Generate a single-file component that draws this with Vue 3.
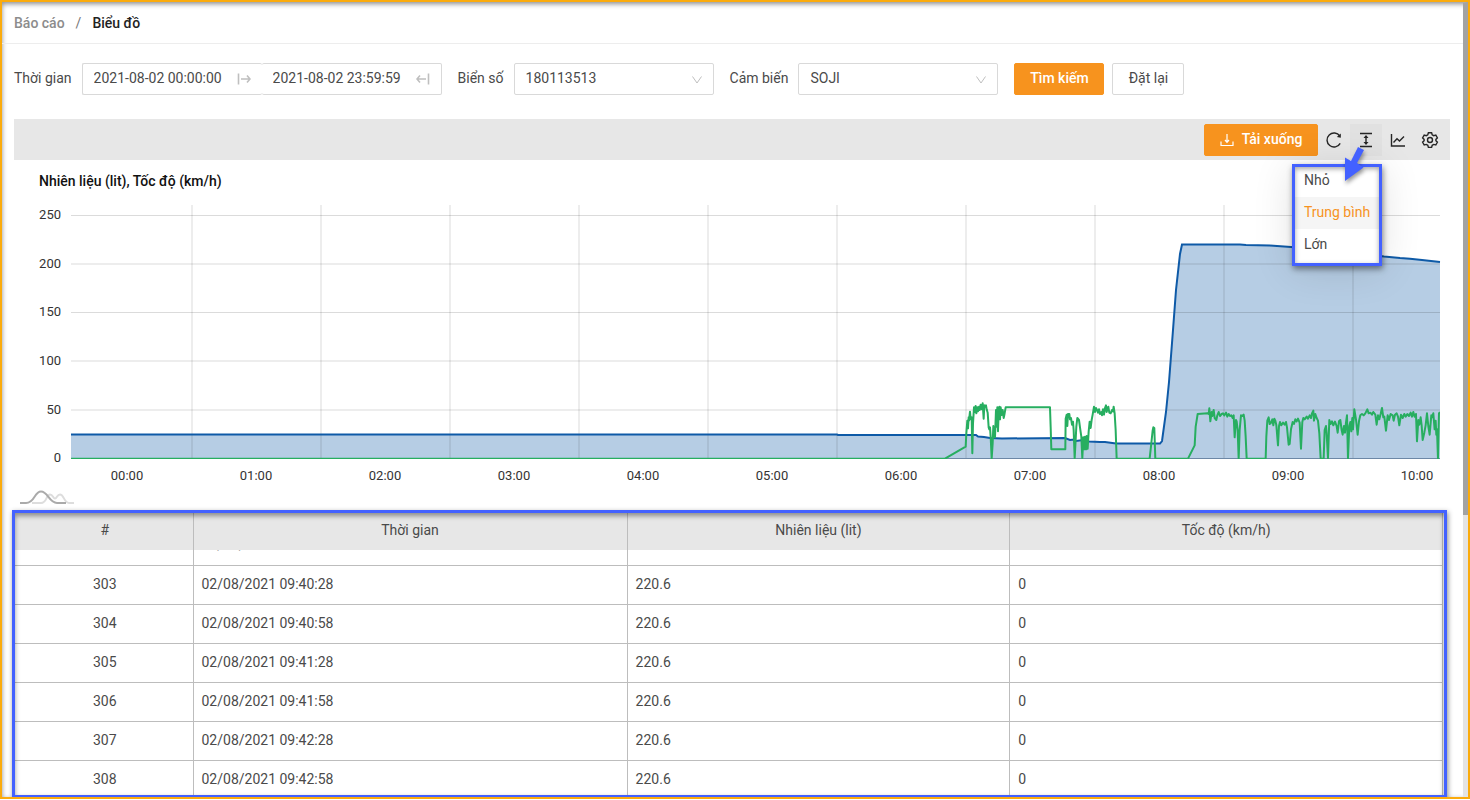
<script setup>
import { onMounted, ref } from 'vue'

const plates = ['180113513']
const sensors = ['SOJI']
const plate = ref('180113513')
const sensor = ref('SOJI')
const from = ref('2021-08-02 00:00:00')
const to = ref('2021-08-02 23:59:59')

const sizes = ['Nhỏ', 'Trung bình', 'Lớn']
const size = ref('Trung bình')

const times = ['09:39:58', '09:40:28', '09:40:58', '09:41:28', '09:41:58', '09:42:28', '09:42:58']
const rows = times.map((t, i) => ({ id: 302 + i, time: `02/08/2021 ${t}`, fuel: '220.6', speed: 0 }))

const yTicks = [
  { label: 250, y: 215.5 }, { label: 200, y: 264 }, { label: 150, y: 312.5 },
  { label: 100, y: 361 }, { label: 50, y: 410 }, { label: 0, y: 458.5 },
]
const hours = Array.from({ length: 11 }, (_, i) => ({
  label: `${String(i).padStart(2, '0')}:00`,
  x: 127 + i * 129,
}))
const gridX = Array.from({ length: 10 }, (_, i) => 192 + i * 129)

const fuel =
  '71,434.5 837,434.5 838,435 976,435 978,436.5 984,437 990,438 1002,438.5 1065,438 1070,440 1074,439.5 1076,441 1083,440 1089,441.5 1100,442 1105,442 1116,443.5 1135,443.5 1160,443.5 1162,441 1166,412 1169,382 1173,330 1176,290 1180,254 1182,244.5 1240,244.5 1246,245 1270,245.5 1291,247 1340,251 1384,256.5 1400,258 1410,258.7 1422,260 1440,262'
const fuelArea = `71,459 ${fuel} 1440,459`

const morning =
  '-2607,206 15,206 77,170 79,130 82,92 84,115 86,82 87,92 90,65 92,88 95,82 97,190 99,100 102,52 104,66 107,48 109,70 112,52 114,64 117,50 119,60 122,44 125,58 128,40 131,86 133,46 136,50 138,46 140,58 143,68 146,112 148,118 150,112 152,140 155,205 158,160 160,108 162,138 165,142 168,60 170,110 172,52 174,124 176,70 178,50 180,88 182,52 185,75 188,60 191,84 193,75 197,52 330,52 332,110 334,178 376,178 377,86 380,74 382,108 384,72 388,72 390,88 393,84 396,104 399,95 401,120 404,205 407,150 409,110 412,84 417,90 420,112 424,140 427,205 430,142 433,178 435,140 438,178 440,138 443,176 446,125 449,95 452,114 455,90 458,74 462,50 465,66 468,54 471,60 474,68 477,58 480,72 484,66 486,76 489,58 492,74 495,54 498,46 500,66 503,56 505,50 508,68 512,70 516,60 519,64 521,50 524,70 527,120 530,206 629,206 634,160 638,122 640,112 643,114 646,206 743,206'
const forenoon =
  '24,206 44,166 47,110 53,72 83,70 86,72 88,55 91,94 95,66 97,78 101,60 104,84 109,90 112,76 116,66 120,78 125,72 129,70 133,76 138,68 142,80 146,72 150,78 154,76 158,84 161,76 164,142 168,90 170,94 173,120 176,206 179,120 183,76 187,78 191,74 194,92 197,140 200,206 257,206 259,140 262,92 266,82 269,102 272,100 277,88 280,106 283,86 286,92 289,105 294,166 297,108 300,96 304,106 309,98 314,104 318,96 321,112 326,164 329,162 333,118 338,96 342,102 346,88 350,94 354,86 359,98 363,176 367,96 370,84 374,88 380,80 384,86 389,76 393,84 396,70 400,62 402,92 406,72 410,84 414,92 418,130 422,206 431,206 434,120 438,108 440,130 444,205 448,90 452,102 456,94 460,106 465,95 470,108 473,128 477,94 481,90 485,120 488,134 492,108 495,128 498,98 501,76 504,206 508,108 511,96 514,124 517,84 519,118 523,58 528,88 533,134 537,94 541,76 546,72 551,76 556,70 562,58 566,70 571,68 576,74 580,66 586,74 590,104 594,76 598,88 602,72 606,54 610,82 613,80 618,122 623,76 627,90 632,72 638,76 641,92 645,74 650,70 654,80 658,106 663,74 668,84 673,72 677,80 682,72 687,78 692,68 696,80 700,66 704,80 708,72 711,154 715,90 718,104 722,82 725,106 728,150 733,128 737,106 741,70 745,108 749,134 754,76 757,82 760,70 764,118 767,92 769,134 771,118 774,206 777,70 780,66'

const scroller = ref(null)
onMounted(() => {
  scroller.value.scrollTop = 23
})
</script>

<template>
  <div class="page">
    <nav class="crumbs" aria-label="Breadcrumb">
      <a href="#">Báo cáo</a>
      <span class="slash">/</span>
      <strong>Biểu đồ</strong>
    </nav>

    <form class="filters" @submit.prevent>
      <div class="field">
        <label for="from">Thời gian</label>
        <div class="range">
          <div class="date">
            <input id="from" v-model="from" type="text" />
            <svg width="14" height="14" viewBox="0 0 14 14"><path d="M1.5 1.5v11M4 7h9M10 3.5L13 7l-3 3.5" /></svg>
          </div>
          <div class="date">
            <input v-model="to" type="text" aria-label="Đến" />
            <svg width="14" height="14" viewBox="0 0 14 14"><path d="M12.5 1.5v11M10 7H1M4 3.5L1 7l3 3.5" /></svg>
          </div>
        </div>
      </div>
      <div class="field">
        <label for="plate">Biển số</label>
        <div class="select">
          <select id="plate" v-model="plate"><option v-for="p in plates" :key="p">{{ p }}</option></select>
          <svg width="12" height="12" viewBox="0 0 12 12"><path d="M1.5 2.5L6 9l4.5-6.5" /></svg>
        </div>
      </div>
      <div class="field">
        <label for="sensor">Cảm biến</label>
        <div class="select">
          <select id="sensor" v-model="sensor"><option v-for="s in sensors" :key="s">{{ s }}</option></select>
          <svg width="12" height="12" viewBox="0 0 12 12"><path d="M1.5 2.5L6 9l4.5-6.5" /></svg>
        </div>
      </div>
      <div class="actions">
        <button class="btn primary search" type="submit">Tìm kiếm</button>
        <button class="btn reset" type="reset">Đặt lại</button>
      </div>
    </form>

    <div class="toolbar">
      <button class="btn primary download" type="button">
        <svg width="14" height="14" viewBox="0 0 14 14"><path d="M7 1v8M5 7l2 2.3L9 7M1 8.5v4h12v-4" /></svg>
        Tải xuống
      </button>
      <button class="icon" type="button" aria-label="Tải lại">
        <svg width="18" height="18" viewBox="0 0 18 18">
          <path d="M15.2 12.3A7 7 0 1 1 14.8 5" /><path class="solid" d="M15.8 2.6v4.2l-4-.9z" />
        </svg>
      </button>
      <div class="density">
        <button class="icon active" type="button" aria-label="Kích thước">
          <svg width="18" height="18" viewBox="0 0 18 18">
            <path d="M3 2.5h12M3 15.5h12M9 5v8" /><path class="solid" d="M6.5 7L9 4l2.5 3zM6.5 11L9 14l2.5-3z" />
          </svg>
        </button>
        <ul class="menu">
          <li v-for="s in sizes" :key="s">
            <button type="button" :class="{ selected: s === size }" @click="size = s">{{ s }}</button>
          </li>
        </ul>
        <svg class="pointer" width="32" height="44" viewBox="0 0 32 44">
          <path d="M23 3l-7 14-6-3.5v23.500l18.500-13.500-6.500-4.500 7-13z" />
        </svg>
      </div>
      <button class="icon" type="button" aria-label="Biểu đồ">
        <svg width="18" height="18" viewBox="0 0 18 18"><path d="M2.5 3v12H16M4.500 11.500L8 7.800l2.500 2.200L15 5.500" /></svg>
      </button>
      <button class="icon" type="button" aria-label="Cài đặt">
        <svg width="18" height="18" viewBox="0 0 18 18">
          <path d="M7.400 1.700h3.200l.6 2.100 1.500.9 2.100-.6 1.600 2.800-1.500 1.500v1.300l1.500 1.500-1.600 2.800-2.100-.6-1.500.9-.6 2.100H7.400l-.6-2.100-1.500-.9-2.100.6-1.600-2.800 1.500-1.500V8.400L1.600 6.900l1.600-2.800 2.100.6 1.500-.9z" />
          <circle cx="9" cy="9" r="2.500" />
        </svg>
      </button>
    </div>

    <svg class="chart" viewBox="14 160 1436 350" role="img" aria-label="Nhiên liệu (lit), Tốc độ (km/h)">
      <clipPath id="plot"><rect x="71" y="205" width="1369" height="254" /></clipPath>
      <text class="title" x="39" y="186">Nhiên liệu (lit), Tốc độ (km/h)</text>
      <polygon class="area" :points="fuelArea" />
      <g class="grid">
        <line v-for="t in yTicks" :key="t.label" x1="71" x2="1440" :y1="t.y" :y2="t.y" />
        <line v-for="x in gridX" :key="x" :x1="x" :x2="x" y1="205" y2="459" />
      </g>
      <line class="base" x1="71" x2="1440" y1="458.500" y2="458.500" />
      <polyline class="fuel" :points="fuel" />
      <g class="speed" clip-path="url(#plot)">
        <polyline transform="translate(940 390) scale(.3333)" :points="morning" />
        <polyline transform="translate(1180 390) scale(.3333)" :points="forenoon" />
      </g>
      <g class="ylabels">
        <text v-for="t in yTicks" :key="t.label" x="61" :y="Math.floor(t.y) + 4">{{ t.label }}</text>
      </g>
      <g class="xlabels">
        <text v-for="h in hours" :key="h.label" :x="h.x" y="480">{{ h.label }}</text>
      </g>
      <g class="mark">
        <path class="pale" d="M32 503h9c6 0 5-8.500 9-8.500 3 0 3 4 5 4s2-4 5-4c4 0 4 8.500 9 8.500h5" />
        <path d="M20 503h6c9 0 8-11.500 15-11.500S49 503 57 503h9" />
      </g>
    </svg>

    <section class="frame">
      <div ref="scroller" class="scroller">
        <table>
          <colgroup><col class="c1" /><col class="c2" /><col class="c3" /><col /></colgroup>
          <thead>
            <tr><th>#</th><th>Thời gian</th><th>Nhiên liệu (lit)</th><th>Tốc độ (km/h)</th></tr>
          </thead>
          <tbody>
            <tr v-for="r in rows" :key="r.id">
              <td>{{ r.id }}</td><td>{{ r.time }}</td><td>{{ r.fuel }}</td><td>{{ r.speed }}</td>
            </tr>
          </tbody>
        </table>
      </div>
    </section>
    <div class="track"><div class="thumb"></div></div>
  </div>
</template>

<style>
body { background: #fff; }
</style>

<style scoped>
* { box-sizing: border-box; }
.page {
  position: relative;
  display: flex;
  flex-direction: column;
  height: calc(100vh - 1px);
  border: 2px solid #fbab0c;
  background: #fff;
  box-shadow: inset 0 2px 5px rgba(0, 0, 0, 0.45);
  font-family: Roboto, "Noto Sans", sans-serif;
  font-size: 14px;
  line-height: 22px;
  color: #4a4a4a;
  overflow: hidden;
}
button, input, select { font: inherit; color: inherit; margin: 0; }
.crumbs {
  display: flex;
  gap: 11px;
  padding: 10px 12px 9px;
  border-bottom: 1px solid #ededed;
  font-weight: 500;
}
.crumbs a { color: #8c8c8c; text-decoration: none; }
.crumbs strong { color: #222; font-weight: 500; }
.slash { color: #777; font-weight: 400; }
.filters {
  display: flex;
  gap: 16px;
  padding: 19px 12px 24px;
}
.field { display: flex; align-items: center; gap: 10px; }
.field label { padding-bottom: 2px; white-space: nowrap; }
.range { display: flex; width: 360px; }
.date {
  display: flex;
  flex: 1 1 0;
  min-width: 0;
  align-items: center;
  height: 32px;
  padding: 0 11px;
  border: 1px solid #d9d9d9;
  border-radius: 2px;
}
.date:first-child { border-right: 0; }
.date:last-child { border-left: 0; }
.date input {
  flex: 1;
  width: 0;
  min-width: 0;
  padding: 0 0 2px;
  border: 0;
  outline: 0;
  background: none;
}
.date svg { flex: none; fill: none; stroke: #bfbfbf; stroke-width: 1.6; }
.select { position: relative; width: 200px; }
.select select {
  display: block;
  width: 100%;
  height: 32px;
  padding: 0 11px 2px;
  border: 1px solid #d9d9d9;
  border-radius: 2px;
  background: #fff;
  appearance: none;
}
.select svg {
  position: absolute;
  right: 11px;
  top: 11px;
  fill: none;
  stroke: #bfbfbf;
  pointer-events: none;
}
.actions { display: flex; gap: 8px; }
.btn {
  height: 32px;
  padding: 0 14px 2px;
  border: 1px solid #d9d9d9;
  border-radius: 2px;
  background: #fff;
  white-space: nowrap;
}
.btn.primary {
  border-color: #f7931e;
  background: #f7931e;
  color: #fff;
  font-weight: 500;
}
.search { width: 90px; }
.reset { width: 72px; }
.toolbar {
  display: flex;
  justify-content: flex-end;
  align-items: center;
  height: 41px;
  margin: 0 18px 0 12px;
  padding-right: 4px;
  background: #e7e7e7;
}
.download { display: flex; align-items: center; justify-content: center; gap: 8px; width: 114px; }
.download svg { position: relative; top: 1px; fill: none; stroke: #fff; stroke-width: 1.2; }
.icon {
  display: flex;
  align-items: center;
  justify-content: center;
  width: 32px;
  height: 32px;
  padding: 0;
  border: 0;
  background: none;
}
.icon svg { fill: none; stroke: #262626; stroke-width: 1.4; }
.icon .solid { fill: #262626; stroke: none; }
.icon.active { background: #e1e1e1; }
.density { position: relative; }
.menu {
  position: absolute;
  z-index: 2;
  top: 40px;
  right: 0;
  width: 90px;
  height: 102px;
  margin: 0;
  padding: 0;
  border: 3px solid #4361ff;
  background: #fff;
  box-shadow: 1px 3px 6px rgba(0, 0, 0, 0.45), 0 4px 40px rgba(0, 0, 0, 0.12);
  list-style: none;
}
.menu::after {
  content: "";
  position: absolute;
  inset: 0;
  box-shadow: inset 0 2px 5px rgba(0, 0, 0, 0.35);
  pointer-events: none;
}
.menu button {
  display: block;
  width: 100%;
  height: 32px;
  padding: 0 0 2px 9px;
  border: 0;
  background: #fff;
  text-align: left;
  white-space: nowrap;
}
.menu li:first-child button { height: 30px; padding-bottom: 4px; }
.menu .selected { background: #f5f5f5; color: #f7931e; }
.pointer {
  position: absolute;
  z-index: 3;
  top: 20px;
  left: -15px;
  fill: #4361ff;
  filter: drop-shadow(1px 3px 2px rgba(0, 0, 0, 0.4));
  pointer-events: none;
}
.chart { display: block; flex: none; margin: 0 18px 0 12px; }
.chart text { font-size: 13px; fill: #333; }
.chart .title { font-size: 14px; font-weight: 500; fill: #111; }
.ylabels { text-anchor: end; }
.xlabels { text-anchor: middle; }
.area { fill: #0e5aa7; fill-opacity: 0.3; }
.grid { stroke: #000; stroke-opacity: 0.14; }
.base { stroke: #6d88a6; }
.fuel { fill: none; stroke: #0e5aa7; stroke-width: 2; }
.speed { fill: none; stroke: #27ae60; stroke-width: 6; stroke-linejoin: round; }
.mark { fill: none; stroke: #aaa; stroke-width: 2; }
.mark .pale { stroke: #ddd; }
.frame {
  position: relative;
  flex: 1;
  min-height: 0;
  margin: 0 21px -1px 10px;
  border: 3px solid #4361ff;
  box-shadow: 1px 2px 5px rgba(0, 0, 0, 0.45);
}
.frame::after {
  content: "";
  position: absolute;
  z-index: 3;
  inset: 0;
  box-shadow: inset 0 3px 5px rgba(0, 0, 0, 0.4);
  pointer-events: none;
}
.scroller { height: 100%; overflow: auto; scrollbar-width: none; }
table {
  width: calc(100% - 1px);
  table-layout: fixed;
  border-spacing: 0;
}
.c1 { width: 12.5%; }
.c2 { width: 30.4%; }
.c3 { width: 26.8%; }
th {
  position: sticky;
  top: 0;
  height: 37px;
  padding: 0 0 3px;
  border-right: 1px solid #bdbdbd;
  background: #e7e7e7;
  font-weight: 400;
}
td {
  height: 39px;
  padding: 0 8px 3px;
  border-right: 1px solid #bdbdbd;
  border-bottom: 1px solid #bdbdbd;
}
th:first-child { padding-left: 2px; }
td:first-child { padding-left: 10px; text-align: center; }
.track {
  position: absolute;
  top: 1px;
  right: 0;
  bottom: 0;
  width: 5px;
  background: #e4e4e4;
}
.thumb { height: 64.5%; background: #a3a3a3; }
</style>
